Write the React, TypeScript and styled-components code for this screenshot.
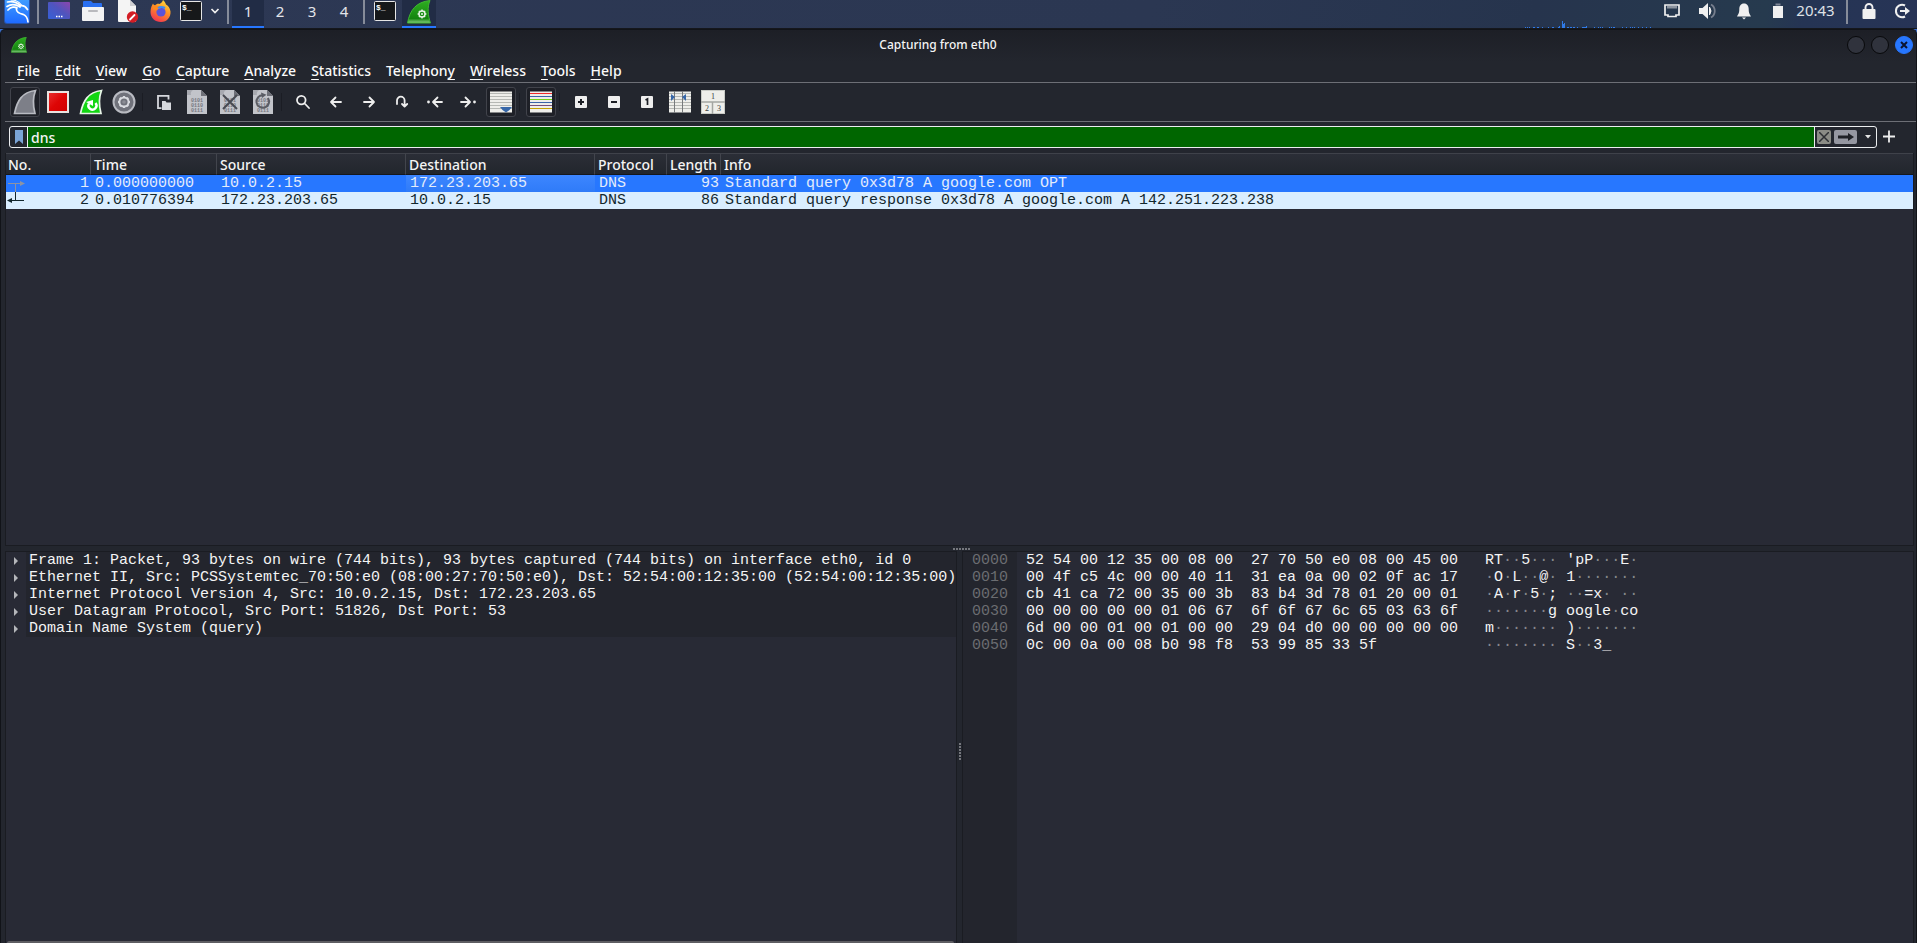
import React from "react";
import styled, { createGlobalStyle, css } from "styled-components";

const ui = `"Noto Sans", "Open Sans", sans-serif`;
const mono = `"Liberation Mono", "DejaVu Sans Mono", monospace`;

const Global = createGlobalStyle`
  * { box-sizing: border-box; }
  body { margin: 0; background: #3b6fce; color: #fff; font: 14px/20px ${ui}; }
  button { font: inherit; color: inherit; background: none; border: 0; padding: 0; margin: 0; }
  svg { display: block; flex: none; }
`;

const Desktop = styled.div`
  height: 100vh;
  display: flex;
  flex-direction: column;
  overflow: hidden;
`;

/* ---------- panel ---------- */
const Panel = styled.header`
  height: 29px;
  flex: none;
  display: flex;
  justify-content: space-between;
  background: linear-gradient(100deg, #2d3854 0%, #2b3752 60%, #26344d 80%, #263a4e 92%, #253454 94%, #273456 100%);
  border-bottom: 1px solid #15171c;
`;
const PanelGroup = styled.div`
  display: flex;
  align-items: flex-start;
`;
const Launcher = styled.button<{ $w: number; $active?: boolean }>`
  width: ${(p) => p.$w}px;
  height: 28px;
  display: flex;
  justify-content: center;
  ${(p) => p.$active && css`background: #212c45; border-bottom: 2px solid #2777ff;`}
`;
const Workspace = styled.button<{ $active?: boolean }>`
  width: 32px;
  height: 28px;
  padding-bottom: 4px;
  font-size: 15px;
  line-height: 20px;
  color: #e3e5ea;
  border-bottom: 2px solid ${(p) => (p.$active ? "#2777ff" : "transparent")};
  background: ${(p) => (p.$active ? "#212c45" : "transparent")};
`;
const PanelRule = styled.span`
  width: 2px;
  height: 24px;
  margin: 0 3px;
  background: #868c9a;
`;
const Clock = styled.time`
  width: 50px;
  padding-right: 5px;
  text-align: center;
  font-size: 15px;
  line-height: 20px;
  color: #dfe1e6;
`;

/* ---------- window ---------- */
const Window = styled.main`
  flex: 1;
  min-height: 0;
  display: flex;
  flex-direction: column;
  border-left: 1px solid #111318;
  border-right: 1px solid #111318;
  border-top: 1px solid #111318;
  border-radius: 5px 5px 0 0;
  background: linear-gradient(#1d1f26, #23262e 32px);
`;
const TitleBar = styled.div`
  height: 30px;
  flex: none;
  display: grid;
  grid-template-columns: 1fr auto 1fr;
  align-items: center;
  padding: 0 3px 0 10px;
`;
const Title = styled.h1`
  margin: 0 48px 0 0;
  font-size: 12px;
  font-weight: 500;
  line-height: 20px;
  color: #f4f4f4;
`;
const Controls = styled.div`
  display: flex;
  justify-content: flex-end;
  gap: 6px;
`;
const Control = styled.button<{ $close?: boolean }>`
  width: 18px;
  height: 18px;
  border-radius: 9px;
  display: flex;
  align-items: center;
  justify-content: center;
  border: 1px solid ${(p) => (p.$close ? "#2777ff" : "#08090b")};
  background: ${(p) => (p.$close ? "#2777ff" : "#30333d")};
`;
const MenuBar = styled.nav`
  height: 23px;
  flex: none;
  display: flex;
  gap: 15px;
  margin-left: 4px;
  padding-left: 12px;
  border-bottom: 1px solid #6d6f76;
`;
const MenuItem = styled.button`
  font-weight: 500;
  line-height: 20px;
  color: #fafafa;
  u { text-underline-offset: 3px; text-decoration-thickness: 1px; text-decoration-skip-ink: none; }
`;
const ToolBar = styled.div`
  height: 39px;
  flex: none;
  display: flex;
  align-items: center;
  gap: 3px;
  margin-left: 4px;
  padding: 0 0 1px 5px;
  border-bottom: 1px solid #6d6f76;
`;
const Tool = styled.button<{ $boxed?: boolean }>`
  width: 30px;
  height: 30px;
  display: flex;
  align-items: center;
  justify-content: center;
  border-radius: 3px;
  border: 1px solid ${(p) => (p.$boxed ? "#41434b" : "transparent")};
  background: ${(p) => (p.$boxed ? "#1e2027" : "transparent")};
`;
const ToolGap = styled.span`
  width: 4px;
  height: 18px;
  border-left: 1px solid #1b1d24;
`;
const FilterBar = styled.div`
  flex: none;
  display: flex;
  align-items: center;
  gap: 5px;
  padding: 4px 20px 5px 8px;
`;
const FilterField = styled.div`
  flex: 1;
  height: 22px;
  display: flex;
  border: 1px solid #eceef0;
  border-radius: 3px;
  overflow: hidden;
`;
const Bookmark = styled.button`
  width: 18px;
  display: flex;
  align-items: center;
  justify-content: center;
  border-right: 1px solid #eceef0;
`;
const FilterInput = styled.input`
  flex: 1;
  min-width: 0;
  border: 0;
  padding: 2px 3px 0;
  outline: none;
  background: #006600;
  color: #f4f4f4;
  font: 500 14px/18px ${ui};
`;
const FilterActions = styled.div`
  display: flex;
  align-items: center;
  gap: 3px;
  width: 62px;
  padding-left: 2px;
  border-left: 1px solid #eceef0;
`;
const Chip = styled.button<{ $w: number; $bg: string }>`
  width: ${(p) => p.$w}px;
  height: 14px;
  border-radius: 2px;
  display: flex;
  align-items: center;
  justify-content: center;
  background: ${(p) => p.$bg};
`;

/* ---------- split view ---------- */
const Split = styled.div`
  flex: 1;
  min-height: 0;
  display: flex;
  flex-direction: column;
  padding: 0 2px 0 4px;
`;
const ListPane = styled.section`
  flex: 1;
  min-height: 0;
  border: 1px solid #1a1c22;
  border-top: 0;
  background: #282a35;
`;
const LowerPanes = styled.div`
  flex: 1;
  min-height: 0;
  display: flex;
`;
const Pane = styled.section`
  flex: 1;
  min-width: 0;
  display: flex;
  flex-direction: column;
  border: 1px solid #1a1c22;
  border-bottom: 0;
  background: #282a35;
`;
const Splitter = styled.div<{ $vertical?: boolean }>`
  flex: none;
  ${(p) =>
    p.$vertical
      ? "width: 5px; flex-direction: column; padding: 8px 0 0 1px;"
      : "height: 5px; flex-direction: row; padding-left: 4px;"}
  display: flex;
  align-items: center;
  justify-content: center;
  gap: 1px;
`;
const Dot = styled.i`
  width: 2px;
  height: 2px;
  background: #75777d;
`;

const Packets = styled.table`
  width: 100%;
  table-layout: fixed;
  border-collapse: separate;
  border-spacing: 0;
`;
const Th = styled.th<{ $w?: number }>`
  ${(p) => p.$w && `width: ${p.$w}px;`}
  height: 22px;
  padding: 2px 0 0 3px;
  text-align: left;
  font-weight: 500;
  line-height: 18px;
  color: #f4f4f4;
  background: linear-gradient(#2b2e37, #22262d);
  border-top: 1px solid #3f424a;
  border-bottom: 1px solid #15171c;
  border-right: 1px solid #42454d;
  &:first-child { padding-left: 2px; }
  &:last-child { border-right: 0; }
`;
const PacketRow = styled.tr<{ $selected?: boolean }>`
  font-family: ${mono};
  font-size: 15px;
  line-height: 17px;
  background: ${(p) => (p.$selected ? "#2777ff" : "#daeeff")};
  color: ${(p) => (p.$selected ? "#e3ecfb" : "#12272e")};
`;
const Td = styled.td<{ $right?: boolean; $hover?: boolean }>`
  height: 17px;
  padding: 0 ${(p) => (p.$right ? 2 : 0)}px 0 4px;
  text-align: ${(p) => (p.$right ? "right" : "left")};
  white-space: nowrap;
  ${(p) => p.$hover && "background: linear-gradient(#3d86ff, #2f7bf8);"}
`;
const NumberCell = styled.div`
  display: flex;
  justify-content: space-between;
  margin-left: -4px;
`;

const Tree = styled.ul`
  list-style: none;
  margin: 0;
  padding: 0;
  flex: 1;
  font-family: ${mono};
  font-size: 15px;
  line-height: 17px;
  color: #f4f4f4;
`;
const TreeItem = styled.li`
  display: flex;
  height: 17px;
`;
const Expander = styled.button`
  width: 20px;
  display: flex;
  align-items: center;
  justify-content: center;
`;
const TreeText = styled.span`
  flex: 1;
  min-width: 0;
  overflow: hidden;
  padding-left: 3px;
  white-space: pre;
  background: #23252d;
`;
const ScrollThumb = styled.div`
  height: 2px;
  margin: 0 2px 0 1px;
  background: #5d5d62;
  border-radius: 2px 2px 0 0;
`;
const BytesBody = styled.div`
  flex: 1;
  background: linear-gradient(90deg, #23252d 54px, transparent 54px);
`;
const Bytes = styled.table`
  border-spacing: 0;
  font-family: ${mono};
  font-size: 15px;
  line-height: 17px;
  white-space: pre;
  color: #f4f4f4;
  th { width: 54px; padding: 0 9px; font-weight: 400; text-align: left; color: #6b6d71; }
  td { padding: 0 0 0 9px; height: 17px; }
  td:last-child { padding-left: 27px; }
`;
const Faint = styled.span`
  color: #85878b;
`;

/* ---------- icons ---------- */
const KaliLogo = () => (
  <svg width="28" height="25" viewBox="0 0 28 25">
    <defs><linearGradient id="kali" x1="0" y1="0" x2="0" y2="1"><stop offset="0" stopColor="#45a5ff" /><stop offset="1" stopColor="#1f6bff" /></linearGradient></defs>
    <rect x="1" y="-4" width="26" height="28" rx="3" fill="#2267e8" opacity=".6" />
    <rect x="2" y="-4" width="24" height="27" rx="2" fill="url(#kali)" />
    <path d="M4.500 2C9 1 14 2.500 17.500 5.500M4 6.500C8 4 13 4.500 17 7M5 10C8 6.500 12 6.500 14 8M13.500 7.500C12.500 12.500 17 13.500 20.500 14.500C23 15.500 24.500 18 25 22M17 6C20 5 22.500 6.500 24.500 9.500" fill="none" stroke="#fff" strokeWidth="1.700" strokeLinecap="round" />
    <path d="M8 0Q15 0 19 5.500" fill="none" stroke="#fff" strokeWidth="1.200" />
  </svg>
);
const DesktopIcon = () => (
  <svg width="22" height="22" viewBox="0 0 22 22">
    <defs><linearGradient id="desk" x1="0" y1="1" x2="1" y2="0"><stop offset="0" stopColor="#3560d8" /><stop offset=".55" stopColor="#5154bd" /><stop offset="1" stopColor="#8d45ad" /></linearGradient></defs>
    <rect y="2" width="22" height="17" rx="1" fill="url(#desk)" />
    <path d="M8 16.500h1.500M10.500 16.500h1.500M13 16.500h1.500" stroke="#fff" strokeWidth="1.500" />
  </svg>
);
const FolderIcon = () => (
  <svg width="24" height="22" viewBox="0 0 24 22">
    <path d="M2 2q0-1 1-1h7l2 2h8q1 0 1 1v6H2z" fill="#2a6ff0" />
    <rect x="1" y="7" width="22" height="14" rx="1" fill="#f2f2f3" />
    <rect x="7" y="10" width="10" height="2" rx="1" fill="#b9b9bd" />
  </svg>
);
const DocumentIcon = () => (
  <svg width="22" height="23" viewBox="0 0 22 23">
    <path d="M1 0h12l6 6v15q0 1-1 1H2q-1 0-1-1z" fill="#f4f4f4" />
    <path d="M13 0v6h6z" fill="#cfcfd2" />
    <circle cx="15.500" cy="17" r="5.700" fill="#d31d25" />
    <path d="M13 19.500l4.500-4.500" stroke="#fff" strokeWidth="1.800" strokeLinecap="round" />
  </svg>
);
const FirefoxIcon = () => (
  <svg width="22" height="22" viewBox="0 0 22 22">
    <defs><linearGradient id="ff" x1=".8" y1="0" x2=".3" y2="1"><stop offset="0" stopColor="#ffe03f" /><stop offset=".45" stopColor="#ff9324" /><stop offset="1" stopColor="#f23351" /></linearGradient></defs>
    <path d="M13 0c2 2 2.500 3 3 4.500 2 1 4 3.500 4.500 7C21 17 17 22 11 22S.5 18 .5 12C.5 8 2 5 3 3.500c.5 1 1 1.500 2 2C6 4 8 3.500 9.500 4 11 3 12.500 2 13 0z" fill="url(#ff)" />
    <circle cx="11" cy="12" r="4.600" fill="#5b53d8" />
    <path d="M3 6c3-1 6 0 8 2-2 .5-4 1-4 3 0-1-2-2-4-1z" fill="#ff8a1f" />
    <path d="M8 8q3-2 7 0" stroke="#3b8df5" strokeWidth="2" fill="none" />
  </svg>
);
const TerminalIcon = () => (
  <svg width="22" height="22" viewBox="0 0 22 22">
    <rect x=".500" y="1.500" width="21" height="19" rx="1" fill="#16181a" stroke="#e6e6e6" />
    <text x="2" y="10" fontFamily="Liberation Mono" fontWeight="700" fontSize="8" fill="#fff">$_</text>
  </svg>
);
const CogMark = ({ x, y, r, color, w }: { x: number; y: number; r: number; color: string; w: number }) => (
  <g transform={`translate(${x} ${y})`} stroke={color} fill="none">
    <circle r={r} strokeWidth={w} />
    {[0, 45, 90, 135].map((a) => (
      <path key={a} d={`M0 ${-r - 1.4}V${-r}M0 ${r}V${r + 1.4}`} transform={`rotate(${a})`} strokeWidth={w} />
    ))}
  </g>
);
const SharkIcon = ({ size }: { size: number }) => (
  <svg width={size} height={size} viewBox="0 0 24 24">
    <defs><linearGradient id="fin" x1="0" y1="0" x2="0" y2="1"><stop offset="0" stopColor="#2fae22" /><stop offset=".8" stopColor="#14850f" /><stop offset="1" stopColor="#8ccc86" /></linearGradient></defs>
    <path d="M.5 23C3 10 9 2 23 .5C20 7 21 16 23.500 23z" fill="url(#fin)" stroke="#3fb632" />
    <CogMark x={15} y={14} r={3} color="#e9f5e8" w={1.4} />
    <circle cx="15" cy="14" r="1" fill="#e9f5e8" />
  </svg>
);
const FinTool = ({ live }: { live?: boolean }) => (
  <svg width="24" height="26" viewBox="0 0 24 26">
    <path d="M1.500 24.500C4 12 9 3 22.500 1.500C20 8 20 17 22 24.500z" fill={live ? "#12d612" : "#7d7f88"} stroke={live ? "#e8f5e8" : "#b9bbc2"} strokeWidth="1.700" />
    {live && (
      <g>
        <path d="M10 14.500a4 4 0 1 0 6.500-.5" fill="none" stroke="#fff" strokeWidth="2.400" />
        <path d="M7 13l7-2v6z" fill="#fff" />
      </g>
    )}
  </svg>
);
const StopTool = () => (
  <svg width="22" height="22" viewBox="0 0 22 22">
    <defs><linearGradient id="stop" x1="0" y1="0" x2="1" y2="1"><stop offset="0" stopColor="#e93030" /><stop offset=".5" stopColor="#de0505" /><stop offset="1" stopColor="#d00000" /></linearGradient></defs>
    <rect x="1" y="1" width="20" height="20" fill="url(#stop)" stroke="#e9e3e0" strokeWidth="2" />
  </svg>
);
const GearTool = () => (
  <svg width="24" height="24" viewBox="0 0 24 24">
    <circle cx="12" cy="12" r="10.500" fill="#70727b" stroke="#b9bbc2" strokeWidth="2" />
    <CogMark x={12} y={12} r={4.600} color="#d9dbe0" w={2} />
    <circle cx="12" cy="12" r="1.800" fill="#8b8d95" />
  </svg>
);
const OpenTool = () => (
  <svg width="16" height="16" viewBox="0 0 16 16">
    <path d="M5.500 14.200H2V1.800h10.500v3.700" fill="none" stroke="#d6d8dd" strokeWidth="1.800" />
    <path d="M6 7h3.500l1 1.500H15V16H6z" fill="#d6d8dd" />
  </svg>
);
const FileTool = ({ mark }: { mark?: "close" | "reload" }) => (
  <svg width="20" height="24" viewBox="0 0 20 24">
    <path d="M0 0h14l6 6v18H0z" fill="#c2c4ca" />
    <path d="M14 0v6h6z" fill="#6e7078" />
    <path d="M0 0h6q-3 2-2 5H0z" fill="#a7a9b0" />
    <g fontFamily="Liberation Mono" fontSize="5" fontWeight="700" fill="#767881">
      <text x="4" y="12">0101</text>
      <text x="4" y="17">0110</text>
      <text x="4" y="22">0111</text>
    </g>
    {mark === "close" && <path d="M3 5l14 14M17 5L3 19" stroke="#484a52" strokeWidth="2" />}
    {mark === "reload" && (
      <g>
        <path d="M15 8a6.300 6.300 0 1 1-5-2.800" fill="none" stroke="#5a5c64" strokeWidth="2" />
        <path d="M8 2.500l5.500 2.200L9 8z" fill="#5a5c64" />
      </g>
    )}
  </svg>
);
const LineIcon = ({ d, dot }: { d: string; dot?: number }) => (
  <svg width="16" height="16" viewBox="0 0 16 16">
    <path d={d} fill="none" stroke="#eeeeee" strokeWidth="1.800" strokeLinecap="round" strokeLinejoin="round" />
    {dot !== undefined && <circle cx={dot} cy="8" r="1.400" fill="#eeeeee" />}
  </svg>
);
const SheetTool = ({ colors, mark }: { colors: string[]; mark?: "scroll" | "resize" }) => (
  <svg width="22" height="22" viewBox="0 0 22 22">
    <rect width="22" height="21" y=".500" fill="#eeeeea" />
    {colors.map((c, i) => <rect key={i} x="0" y={2 + i * 3} width="22" height="1" fill={c} />)}
    {mark === "scroll" && <path d="M10 16h12l-2.500 3-3.500 2.500-3.500-2.500z" fill="#3767a8" />}
    {mark === "resize" && (
      <g>
        <path d="M5.500 0v22M13.500 0v22" stroke="#777a7c" />
        <path d="M2 3l4 3-4 4zM17 3l-4 3 4 4z" fill="#3767a8" />
      </g>
    )}
  </svg>
);
const ZoomTool = ({ kind }: { kind: "in" | "out" | "normal" }) => (
  <svg width="12" height="12" viewBox="0 0 12 12">
    <rect width="12" height="12" rx="1" fill="#eeeeee" />
    {kind === "normal"
      ? <path d="M4.500 4L6.500 3v6" fill="none" stroke="#1c1e24" strokeWidth="1.700" />
      : <path d={kind === "in" ? "M3 6h6M6 3v6" : "M3 6h6"} stroke="#1c1e24" strokeWidth="2" />}
  </svg>
);
const LayoutTool = () => (
  <svg width="24" height="24" viewBox="0 0 24 24">
    <rect x=".500" y=".500" width="23" height="23" fill="#eeeeea" stroke="#c9cbc6" />
    <path d="M0 12h24M11.500 12v12" stroke="#a4a6a2" strokeWidth="1.500" />
    <g fontFamily="Liberation Serif" fontSize="8" fill="#3a3c40">
      <text x="10" y="9">1</text>
      <text x="4" y="21">2</text>
      <text x="16" y="21">3</text>
    </g>
  </svg>
);
const NetworkIcon = () => (
  <svg width="16" height="22" viewBox="0 0 16 22">
    <path d="M1 5h14v10h-3v1.500H4V15H1z" fill="none" stroke="#f0f0f0" strokeWidth="1.700" />
    <path d="M4 6v2.500M6 6v2.500M8 6v2.500M10 6v2.500M12 6v2.500" stroke="#f0f0f0" />
  </svg>
);
const VolumeIcon = () => (
  <svg width="18" height="22" viewBox="0 0 18 22">
    <path d="M0 8h3.500L9 3v16l-5.500-5H0z" fill="#f0f0f0" />
    <path d="M10.500 7q3 4 0 8z" fill="#f0f0f0" stroke="#f0f0f0" />
    <path d="M12 4.500a7.500 7.500 0 0 1 0 13" fill="none" stroke="#777f8e" strokeWidth="1.800" />
  </svg>
);
const BellIcon = () => (
  <svg width="14" height="22" viewBox="0 0 14 22">
    <path d="M7 3.500c3.300 0 4.700 2.500 4.700 5.500 0 4 .8 5 2.300 7.500H0C1.500 14 2.300 13 2.300 9c0-3 1.400-5.500 4.700-5.500zM5 17.500h4l-2 2z" fill="#f0f0f0" />
  </svg>
);
const BatteryIcon = () => (
  <svg width="10" height="22" viewBox="0 0 10 22">
    <path d="M2.500 3.500h5v2h-5z" fill="#7f8796" />
    <path d="M0 6h10v12H0z" fill="#f0f0f0" />
  </svg>
);
const LockIcon = () => (
  <svg width="14" height="22" viewBox="0 0 14 22">
    <rect x=".500" y="9" width="13" height="10" rx="1" fill="#f0f0f0" />
    <path d="M3.500 10V7.500a3.500 3.500 0 0 1 7 0V10" fill="none" stroke="#f0f0f0" strokeWidth="1.900" />
  </svg>
);
const LogoutIcon = () => (
  <svg width="16" height="22" viewBox="0 0 16 22">
    <path d="M11 5.500A6.200 6.200 0 1 0 11 16.500" fill="none" stroke="#f0f0f0" strokeWidth="2" />
    <path d="M6 11h7" stroke="#f0f0f0" strokeWidth="2" />
    <path d="M11 7l5 4-5 4z" fill="#f0f0f0" />
  </svg>
);
const spikes = [0, 2, 4, 8, 9, 12, 13, 17, 23, 27, 28, 33, 34, 42, 43, 45, 46, 48, 49, 52, 57, 58, 59, 60, 61, 69, 73, 75, 77, 84, 86, 88, 89, 97, 101, 105, 107, 109, 113, 117, 121, 125];
const LoadGraph = () => (
  <svg width="128" height="28" viewBox="0 0 128 28" fill="#2f7ae8">
    {spikes.map((x) => <rect key={x} x={x} y="27" width="1" height="1" />)}
    <path d="M34 26h1v2h-1zM37 21h1v7h-1zM38 24h1v4h-1zM39 23h1v5h-1zM61 26h1v2h-1z" />
  </svg>
);

/* ---------- data ---------- */
const menus: [string, number][] = [["File", 0], ["Edit", 0], ["View", 0], ["Go", 0], ["Capture", 0], ["Analyze", 0], ["Statistics", 0], ["Telephony", 8], ["Wireless", 0], ["Tools", 0], ["Help", 0]];
const gray = ["#b6b8b4", "#b6b8b4", "#b6b8b4", "#b6b8b4", "#b6b8b4", "#b6b8b4"];
const rainbow = ["#ee2b2b", "#3a66a8", "#73d216", "#3a66a8", "#75507b", "#c4a000"];

type ToolDef = [string, React.ReactNode, boolean?] | null;
const tools: ToolDef[] = [
  ["Start capturing", <FinTool />, true],
  ["Stop capturing", <StopTool />],
  ["Restart capture", <FinTool live />],
  ["Capture options", <GearTool />],
  null,
  ["Open file", <OpenTool />],
  ["Save file", <FileTool />],
  ["Close file", <FileTool mark="close" />],
  ["Reload file", <FileTool mark="reload" />],
  null,
  ["Find packet", <LineIcon d="M6.300 1.800a4.300 4.300 0 1 1 0 8.600a4.300 4.300 0 0 1 0-8.600M9.700 9.500L14 14" />],
  ["Previous packet", <LineIcon d="M13 8H3M7.500 3.500L3 8l4.500 4.500" />],
  ["Next packet", <LineIcon d="M3 8h10M8.500 3.500L13 8l-4.500 4.500" />],
  ["Go to packet", <LineIcon d="M3 10V6.500a3.800 3.800 0 0 1 7.600 0V12M8 10l2.600 2.600L13.200 10" />],
  ["First packet", <LineIcon dot={1.500} d="M15 8H6.500M10.500 3.500L6 8l4.500 4.500" />],
  ["Last packet", <LineIcon dot={14.500} d="M1 8h8.500M5.500 3.500L10 8l-4.500 4.500" />],
  ["Auto scroll", <SheetTool colors={gray} mark="scroll" />, true],
  null,
  ["Colorize", <SheetTool colors={rainbow} />, true],
  null,
  ["Zoom in", <ZoomTool kind="in" />],
  ["Zoom out", <ZoomTool kind="out" />],
  ["Normal size", <ZoomTool kind="normal" />],
  ["Resize columns", <SheetTool colors={gray} mark="resize" />],
  ["Reset layout", <LayoutTool />],
];

const columns: [string, number?][] = [["No.", 85], ["Time", 126], ["Source", 189], ["Destination", 189], ["Protocol", 72], ["Length", 54], ["Info"]];
const packets = [
  { no: 1, time: "0.000000000", src: "10.0.2.15", dst: "172.23.203.65", proto: "DNS", len: 93, info: "Standard query 0x3d78 A google.com OPT" },
  { no: 2, time: "0.010776394", src: "172.23.203.65", dst: "10.0.2.15", proto: "DNS", len: 86, info: "Standard query response 0x3d78 A google.com A 142.251.223.238" },
];
const layers = [
  "Frame 1: Packet, 93 bytes on wire (744 bits), 93 bytes captured (744 bits) on interface eth0, id 0",
  "Ethernet II, Src: PCSSystemtec_70:50:e0 (08:00:27:70:50:e0), Dst: 52:54:00:12:35:00 (52:54:00:12:35:00)",
  "Internet Protocol Version 4, Src: 10.0.2.15, Dst: 172.23.203.65",
  "User Datagram Protocol, Src Port: 51826, Dst Port: 53",
  "Domain Name System (query)",
];
const dump = [
  ["0000", "52 54 00 12 35 00 08 00  27 70 50 e0 08 00 45 00", "RT··5··· 'pP···E·"],
  ["0010", "00 4f c5 4c 00 00 40 11  31 ea 0a 00 02 0f ac 17", "·O·L··@· 1·······"],
  ["0020", "cb 41 ca 72 00 35 00 3b  83 b4 3d 78 01 20 00 01", "·A·r·5·; ··=x· ··"],
  ["0030", "00 00 00 00 00 01 06 67  6f 6f 67 6c 65 03 63 6f", "·······g oogle·co"],
  ["0040", "6d 00 00 01 00 01 00 00  29 04 d0 00 00 00 00 00", "m······· )·······"],
  ["0050", "0c 00 0a 00 08 b0 98 f8  53 99 85 33 5f", "········ S··3_"],
];

const Relation = ({ first }: { first: boolean }) => (
  <svg width="22" height="17" viewBox="0 0 22 17">
    {first
      ? <g fill="#8d93a3" stroke="#8d93a3"><path d="M2 8.500h13M9.500 8.500V17" /><path d="M14 6l5 2.500-5 2.500z" strokeWidth="0" /></g>
      : <g fill="#12272e" stroke="#12272e"><path d="M4 8.500h14M9.500 0v8.500" /><path d="M6 6L1 8.500 6 11z" strokeWidth="0" /></g>}
  </svg>
);
const Handle = ({ vertical }: { vertical?: boolean }) => (
  <Splitter $vertical={vertical} role="separator">{[0, 1, 2, 3, 4, 5].map((i) => <Dot key={i} />)}</Splitter>
);

export default function App() {
  return (
    <Desktop>
      <Global />
      <Panel>
        <PanelGroup>
          <Launcher $w={34} aria-label="Applications"><KaliLogo /></Launcher>
          <PanelRule />
          <Launcher $w={34} aria-label="Desktop"><DesktopIcon /></Launcher>
          <Launcher $w={34} aria-label="Files"><FolderIcon /></Launcher>
          <Launcher $w={36} aria-label="Text editor"><DocumentIcon /></Launcher>
          <Launcher $w={30} aria-label="Firefox"><FirefoxIcon /></Launcher>
          <Launcher $w={30} aria-label="Terminal"><TerminalIcon /></Launcher>
          <Launcher $w={18} aria-label="More terminals">
            <svg width="10" height="22" viewBox="0 0 10 22"><path d="M1.500 9l3.500 3.500L8.500 9" fill="none" stroke="#f0f0f0" strokeWidth="1.700" /></svg>
          </Launcher>
          <PanelRule />
          {[1, 2, 3, 4].map((n) => <Workspace key={n} $active={n === 1}>{n}</Workspace>)}
          <PanelRule />
          <Launcher $w={34} aria-label="Terminal window"><TerminalIcon /></Launcher>
          <Launcher $w={34} $active aria-label="Wireshark window"><SharkIcon size={24} /></Launcher>
        </PanelGroup>
        <PanelGroup>
          <LoadGraph />
          <Launcher $w={38} aria-label="Network"><NetworkIcon /></Launcher>
          <Launcher $w={34} aria-label="Volume"><VolumeIcon /></Launcher>
          <Launcher $w={38} aria-label="Notifications"><BellIcon /></Launcher>
          <Launcher $w={30} aria-label="Battery"><BatteryIcon /></Launcher>
          <Clock>20:43</Clock>
          <PanelRule />
          <Launcher $w={36} aria-label="Lock"><LockIcon /></Launcher>
          <Launcher $w={30} aria-label="Log out"><LogoutIcon /></Launcher>
        </PanelGroup>
      </Panel>
      <Window>
        <TitleBar>
          <SharkIcon size={16} />
          <Title>Capturing from eth0</Title>
          <Controls>
            <Control aria-label="Minimize" />
            <Control aria-label="Maximize" />
            <Control $close aria-label="Close">
              <svg width="8" height="8" viewBox="0 0 8 8"><path d="M1 1l6 6M7 1L1 7" stroke="#0b1430" strokeWidth="2" /></svg>
            </Control>
          </Controls>
        </TitleBar>
        <MenuBar>
          {menus.map(([name, k]) => (
            <MenuItem key={name}>{name.slice(0, k)}<u>{name[k]}</u>{name.slice(k + 1)}</MenuItem>
          ))}
        </MenuBar>
        <ToolBar>
          {tools.map((t, i) => (t ? <Tool key={i} aria-label={t[0]} $boxed={t[2]}>{t[1]}</Tool> : <ToolGap key={i} />))}
        </ToolBar>
        <FilterBar>
          <FilterField>
            <Bookmark aria-label="Saved filters">
              <svg width="8" height="14" viewBox="0 0 8 14"><path d="M0 0h8v14l-4-3.500L0 14z" fill="#7aa4d6" /></svg>
            </Bookmark>
            <FilterInput aria-label="Display filter" defaultValue="dns" />
            <FilterActions>
              <Chip $w={14} $bg="#8b8c86" aria-label="Clear filter">
                <svg width="10" height="10" viewBox="0 0 10 10"><path d="M0 0l10 10M10 0L0 10" stroke="#2e3034" strokeWidth="1.500" /></svg>
              </Chip>
              <Chip $w={24} $bg="#9597a1" aria-label="Apply filter">
                <svg width="16" height="8" viewBox="0 0 16 8"><path d="M0 2.500h10V0l6 4-6 4V5.500H0z" fill="#1e2026" /></svg>
              </Chip>
              <Chip $w={16} $bg="transparent" aria-label="Recent filters">
                <svg width="6" height="4" viewBox="0 0 6 4"><path d="M0 0h6L3 3.500z" fill="#e4e4e4" /></svg>
              </Chip>
            </FilterActions>
          </FilterField>
          <button aria-label="Add filter button">
            <svg width="14" height="14" viewBox="0 0 14 14"><path d="M1 6.500h12M7 .500v12" stroke="#eeeeee" strokeWidth="1.800" /></svg>
          </button>
        </FilterBar>
        <Split>
          <ListPane>
            <Packets>
              <thead><tr>{columns.map(([name, w]) => <Th key={name} $w={w}>{name}</Th>)}</tr></thead>
              <tbody>
                {packets.map((p) => (
                  <PacketRow key={p.no} $selected={p.no === 1}>
                    <Td $right><NumberCell><Relation first={p.no === 1} />{p.no}</NumberCell></Td>
                    <Td>{p.time}</Td>
                    <Td>{p.src}</Td>
                    <Td $hover={p.no === 1}>{p.dst}</Td>
                    <Td>{p.proto}</Td>
                    <Td $right>{p.len}</Td>
                    <Td>{p.info}</Td>
                  </PacketRow>
                ))}
              </tbody>
            </Packets>
          </ListPane>
          <Handle />
          <LowerPanes>
            <Pane>
              <Tree>
                {layers.map((l) => (
                  <TreeItem key={l}>
                    <Expander aria-label="Expand"><svg width="4" height="8" viewBox="0 0 4 8"><path d="M0 0l4 4-4 4z" fill="#b4b6ba" /></svg></Expander>
                    <TreeText>{l}</TreeText>
                  </TreeItem>
                ))}
              </Tree>
              <ScrollThumb />
            </Pane>
            <Handle vertical />
            <Pane>
              <BytesBody>
                <Bytes>
                  <tbody>
                    {dump.map(([offset, hex, ascii]) => (
                      <tr key={offset}>
                        <th scope="row">{offset}</th>
                        <td>{hex}</td>
                        <td>{ascii.split(/(·+)/).map((s, i) => (s.startsWith("·") ? <Faint key={i}>{s}</Faint> : s))}</td>
                      </tr>
                    ))}
                  </tbody>
                </Bytes>
              </BytesBody>
            </Pane>
          </LowerPanes>
        </Split>
      </Window>
    </Desktop>
  );
}
